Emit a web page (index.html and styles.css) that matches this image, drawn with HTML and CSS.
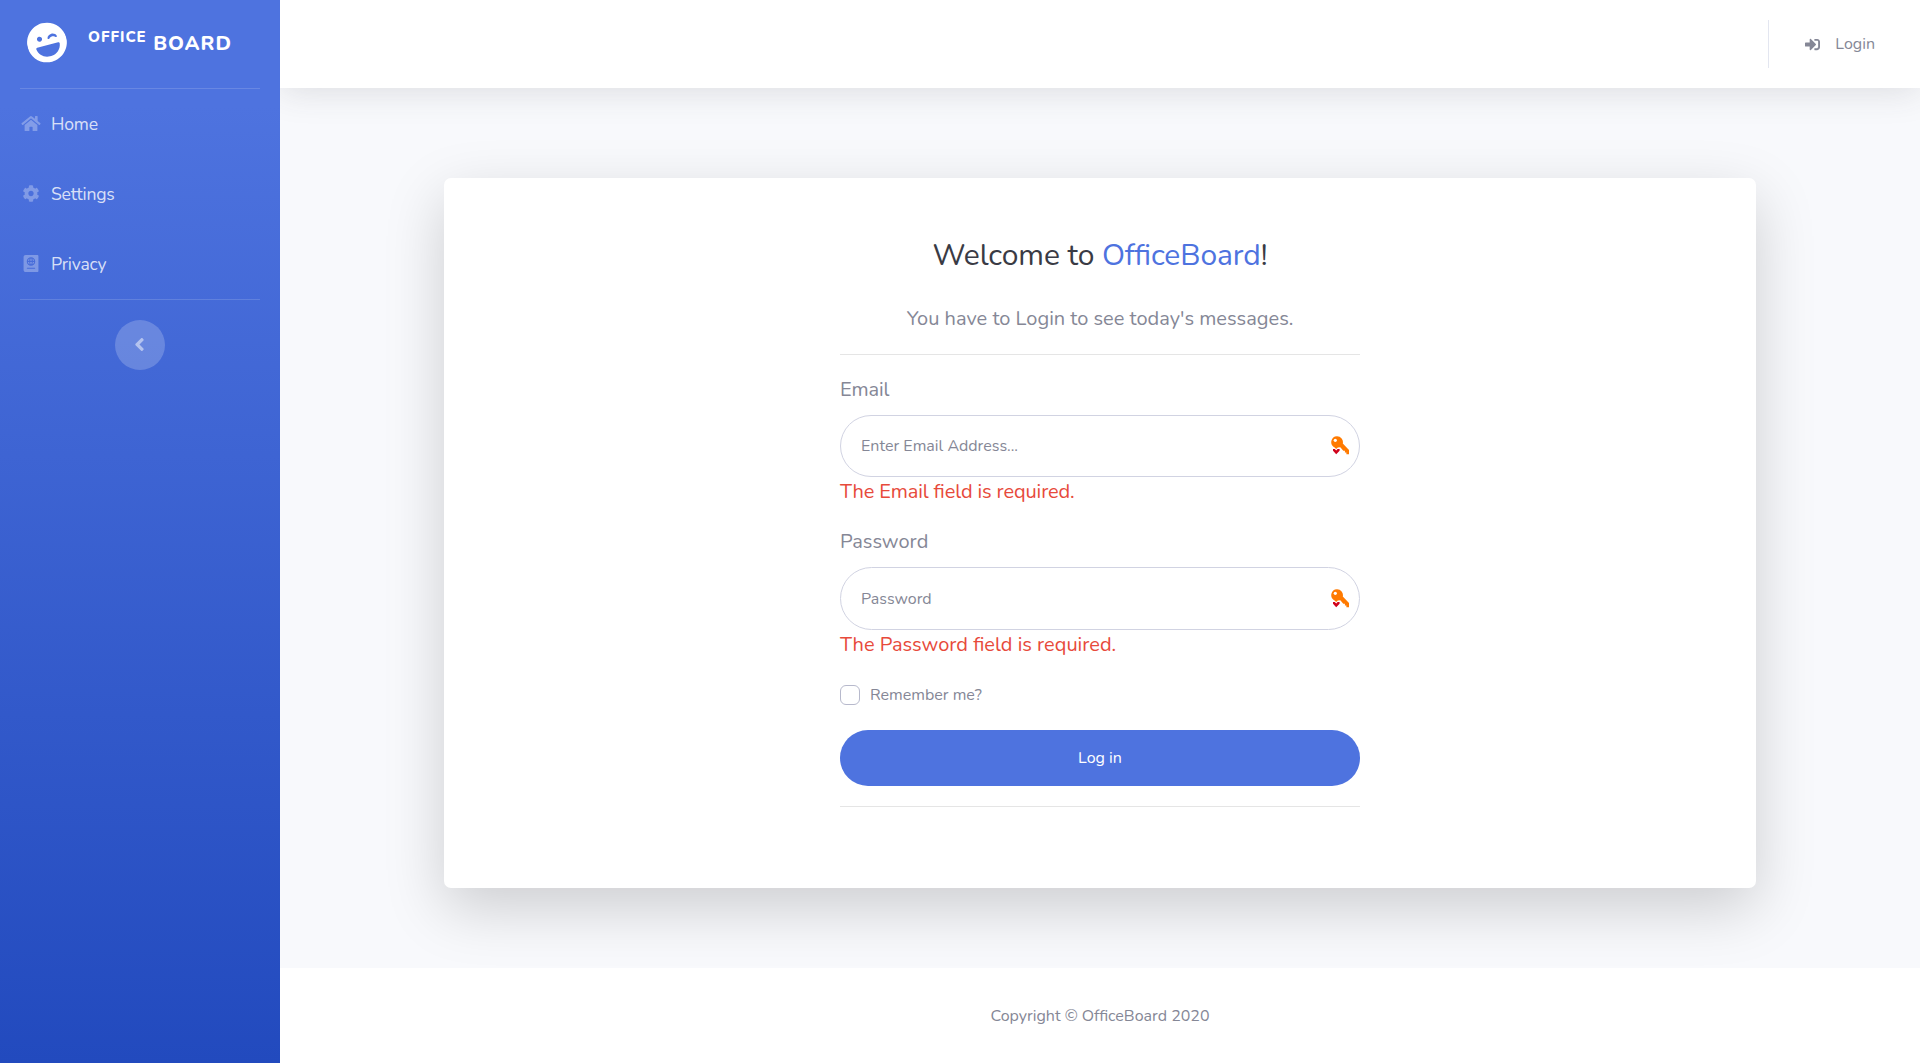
FILE: index.html
```
<!DOCTYPE html>
<html lang="en">
<head>
<meta charset="utf-8">
<title>OfficeBoard</title>
<link rel="stylesheet" href="styles.css">
</head>
<body>
<div class="wrapper">
  <nav class="sidebar">
    <a class="brand">
      <svg class="brand-icon" viewBox="0 0 496 512"><path d="M248 8C111 8 0 119 0 256s111 248 248 248 248-111 248-248S385 8 248 8zm20.1 198c4-25.2 34.2-42.1 59.9-42.1s55.9 16.9 59.9 42.1c1.7 11.1-11.4 18.3-19.8 10.8l-9.5-8.5c-14.8-13.2-46.2-13.2-61 0L288 217c-8.4 7.4-21.6.3-19.9-11zM168 160c17.7 0 32 14.3 32 32s-14.3 32-32 32-32-14.3-32-32 14.3-32 32-32zm88 272h-16c-73.4 0-134-55-142.9-126-1.2-9.5 6.3-18 15.9-18h270c9.6 0 17.1 8.4 15.9 18-8.9 71-69.5 126-142.9 126z"/></svg>
      <div class="brand-text"><sup>Office</sup> Board</div>
    </a>
    <hr class="divider">
    <a class="nav-link">
      <svg viewBox="0 0 576 512" class="nav-icon"><path d="M280.37 148.26L96 300.11V464a16 16 0 0 0 16 16l112.06-.29a16 16 0 0 0 15.92-16V368a16 16 0 0 1 16-16h64a16 16 0 0 1 16 16v95.64a16 16 0 0 0 16 16.05L464 480a16 16 0 0 0 16-16V300L295.67 148.26a12.19 12.19 0 0 0-15.3 0zM571.6 251.47L488 182.56V44.05a12 12 0 0 0-12-12h-56a12 12 0 0 0-12 12v72.61L318.47 43a48 48 0 0 0-61 0L4.34 251.47a12 12 0 0 0-1.6 16.9l25.5 31A12 12 0 0 0 45.15 301l235.22-193.74a12.19 12.19 0 0 1 15.3 0L530.9 301a12 12 0 0 0 16.9-1.6l25.5-31a12 12 0 0 0-1.7-16.93z"/></svg>
      <span>Home</span>
    </a>
    <a class="nav-link">
      <svg viewBox="0 0 512 512" class="nav-icon"><path d="M487.4 315.7l-42.6-24.6c4.3-23.2 4.3-47 0-70.2l42.6-24.6c4.9-2.8 7.1-8.6 5.5-14-11.1-35.6-30-67.8-54.7-94.6-3.8-4.1-10-5.1-14.8-2.3L380.8 110c-17.9-15.4-38.5-27.3-60.8-35.1V25.8c0-5.6-3.9-10.5-9.4-11.7-36.7-8.2-74.3-7.8-109.2 0-5.5 1.2-9.4 6.1-9.4 11.7V75c-22.2 7.9-42.8 19.8-60.8 35.1L88.7 85.5c-4.9-2.8-11-1.9-14.8 2.3-24.7 26.7-43.6 58.9-54.7 94.6-1.7 5.4.6 11.2 5.5 14L67.3 221c-4.3 23.2-4.3 47 0 70.2l-42.6 24.6c-4.9 2.8-7.1 8.6-5.5 14 11.1 35.6 30 67.8 54.7 94.6 3.8 4.1 10 5.1 14.8 2.3l42.6-24.6c17.9 15.4 38.5 27.3 60.8 35.1v49.2c0 5.6 3.9 10.5 9.4 11.7 36.7 8.2 74.3 7.8 109.2 0 5.5-1.2 9.4-6.1 9.4-11.7v-49.2c22.2-7.9 42.8-19.8 60.8-35.1l42.6 24.6c4.9 2.8 11 1.9 14.8-2.3 24.7-26.7 43.6-58.9 54.7-94.6 1.5-5.5-.7-11.3-5.6-14.1zM256 336c-44.1 0-80-35.9-80-80s35.9-80 80-80 80 35.9 80 80-35.9 80-80 80z"/></svg>
      <span>Settings</span>
    </a>
    <a class="nav-link">
      <svg viewBox="0 0 448 512" class="nav-icon"><path d="M129.62 176h39.09c1.49-27.03 6.54-51.35 14.21-70.41-27.71 13.24-48.02 39.19-53.3 70.41zm0 32c5.29 31.22 25.59 57.17 53.3 70.41-7.68-19.06-12.72-43.38-14.21-70.41h-39.09zM224 286.69c7.69-7.45 20.77-34.42 23.43-78.69h-46.87c2.67 44.26 15.75 71.24 23.44 78.69zM200.57 176h46.87c-2.66-44.26-15.74-71.24-23.43-78.69-7.7 7.45-20.78 34.43-23.44 78.69zm64.51 102.41c27.71-13.24 48.02-39.19 53.3-70.41h-39.09c-1.49 27.03-6.53 51.35-14.21 70.41zM416 0H64C28.65 0 0 28.65 0 64v384c0 35.35 28.65 64 64 64h352c17.67 0 32-14.33 32-32V32c0-17.67-14.33-32-32-32zm-80 416H112c-8.8 0-16-7.2-16-16s7.2-16 16-16h224c8.8 0 16 7.2 16 16s-7.2 16-16 16zm-112-96c-70.69 0-128-57.31-128-128S153.31 64 224 64s128 57.31 128 128-57.31 128-128 128zm41.08-214.41c7.68 19.06 12.72 43.38 14.21 70.41h39.09c-5.28-31.22-25.59-57.17-53.3-70.41z"/></svg>
      <span>Privacy</span>
    </a>
    <hr class="divider">
    <button class="toggle" aria-label="Collapse"><svg viewBox="0 0 256 512"><path d="M31.7 239l136-136c9.4-9.4 24.6-9.4 33.9 0l22.6 22.6c9.4 9.4 9.4 24.6 0 33.9L127.9 256l96.4 96.4c9.4 9.4 9.4 24.6 0 33.9L201.7 409c-9.4 9.4-24.6 9.4-33.9 0l-136-136c-9.5-9.4-9.5-24.6-.1-34z"/></svg></button>
  </nav>
  <div class="content">
    <header class="topbar">
      <div class="topbar-divider"></div>
      <a class="login-link">
        <svg viewBox="0 0 512 512"><path d="M416 448h-84c-6.6 0-12-5.4-12-12v-40c0-6.6 5.4-12 12-12h84c17.7 0 32-14.3 32-32V160c0-17.7-14.3-32-32-32h-84c-6.6 0-12-5.4-12-12V76c0-6.6 5.4-12 12-12h84c53 0 96 43 96 96v192c0 53-43 96-96 96zm-47-209L201 71c-15-15-41-4.5-41 17v96H24c-13.3 0-24 10.7-24 24v96c0 13.3 10.7 24 24 24h136v96c0 21.5 26 32 41 17l168-168c9.3-9.4 9.3-24.6 0-34z"/></svg>
        <span>Login</span>
      </a>
    </header>
    <main class="main">
      <section class="card">
        <form class="form">
          <h1 class="title">Welcome to <span>OfficeBoard</span>!</h1>
          <p class="lead">You have to Login to see today's messages.</p>
          <hr class="rule">
          <label class="label tight" for="email">Email</label>
          <div class="field">
            <input id="email" type="text" placeholder="Enter Email Address...">
            <svg class="key" viewBox="0 0 18 19"><path fill="#ff7a00" d="M6 .2a5.900 5.900 0 0 1 5.800 7.200L18 14v4.200h-2.600v-1.700h-1.500v-1.800h-1.600L9.300 11.300 6.800 11.500 5.200 13 3.600 11.400A5.900 5.900 0 0 1 6 .2z"/><circle cx="4.300" cy="4.300" r="1.600" fill="#fff"/><path fill="#d0021b" d="M2 13h1.800l1.400 1.400L6.600 13h2v1.800l-3.400 3.400L2 14.800z"/></svg>
          </div>
          <div class="error tight">The Email field is required.</div>
          <label class="label" for="password">Password</label>
          <div class="field tall">
            <input id="password" type="password" placeholder="Password">
            <svg class="key" viewBox="0 0 18 19"><path fill="#ff7a00" d="M6 .2a5.900 5.900 0 0 1 5.800 7.200L18 14v4.200h-2.600v-1.700h-1.500v-1.800h-1.600L9.300 11.300 6.800 11.500 5.200 13 3.600 11.400A5.900 5.900 0 0 1 6 .2z"/><circle cx="4.300" cy="4.300" r="1.600" fill="#fff"/><path fill="#d0021b" d="M2 13h1.800l1.400 1.400L6.600 13h2v1.800l-3.400 3.400L2 14.800z"/></svg>
          </div>
          <div class="error">The Password field is required.</div>
          <label class="remember"><input type="checkbox"><span>Remember me?</span></label>
          <button class="submit" type="button">Log in</button>
          <hr class="rule">
        </form>
      </section>
    </main>
    <footer class="footer">Copyright © OfficeBoard 2020</footer>
  </div>
</div>
</body>
</html>
```
FILE: styles.css
```
* { box-sizing: border-box; }
html { font-size: 20px; }
body {
  margin: 0;
  font-family: Nunito, Lato, "Open Sans", sans-serif;
  font-size: 1rem;
  line-height: 1.5;
  color: #858796;
  background: #f8f9fc;
}
button, input { font-family: inherit; }
.wrapper { display: flex; height: 1063px; overflow: hidden; }

.sidebar {
  width: 280px;
  flex: none;
  display: flex;
  flex-direction: column;
  background: linear-gradient(180deg, #4e73df 10%, #224abe 100%);
}
.brand {
  height: 88px;
  display: flex;
  align-items: center;
  justify-content: center;
  color: #fff;
  font-weight: 800;
  letter-spacing: .95px;
  text-transform: uppercase;
}
.brand-icon { width: 40px; height: 41px; fill: #fff; transform: rotate(-15deg); margin: -3px 1px 0 -1px; }
.brand-text { margin: 0 20px; white-space: nowrap; }
.brand-text sup { font-size: 75%; line-height: 0; position: relative; top: -.55em; vertical-align: baseline; }
.divider { width: 240px; margin: 0 auto; border: 0; border-top: 1px solid rgba(255,255,255,.15); }
.nav-link {
  height: 70px;
  padding: 0 20px;
  display: flex;
  align-items: center;
  font-size: 17.6px;
  letter-spacing: -.2px;
  color: rgba(255,255,255,.8);
}
.nav-link span { padding-top: 1px; }
.nav-icon { width: 22px; height: 17px; margin: 0 9px 1px 0; fill: rgba(255,255,255,.3); }
.toggle {
  width: 50px;
  height: 50px;
  margin: 20px auto 0;
  padding: 0;
  border: 0;
  border-radius: 50%;
  background: rgba(255,255,255,.2);
  display: flex;
  align-items: center;
  justify-content: center;
}
.toggle svg { height: 21px; width: 11px; fill: rgba(255,255,255,.5); margin: 0 2px 1px 0; }

.content { flex: 1; display: flex; flex-direction: column; overflow: hidden; }
.topbar {
  height: 88px;
  flex: none;
  display: flex;
  align-items: center;
  justify-content: flex-end;
  padding-right: 45px;
  background: #fff;
  box-shadow: 0 3px 35px rgba(58,59,69,.15);
}
.topbar-divider { width: 1px; height: 48px; background: #e3e6f0; margin-right: 36px; }
.login-link { display: flex; align-items: center; font-size: 16px; }
.login-link svg { width: 15px; height: 15px; fill: #858796; margin-right: 15px; }

.main { flex: 1; padding: 90px 164px 80px; }
.card {
  height: 710px;
  background: #fff;
  border-radius: 7px;
  box-shadow: 0 20px 60px rgba(0,0,0,.175);
  display: flex;
  justify-content: center;
}
.form { width: 520px; padding-top: 60px; }
.title {
  margin: 0;
  font-size: 30px;
  line-height: 36px;
  font-weight: 400;
  letter-spacing: -.1px;
  font-feature-settings: "liga" 1;
  color: #3a3b45;
  text-align: center;
}
.title span { color: #4e73df; }
.lead { margin: 30px 0 20px; line-height: 30px; text-align: center; }
.rule { margin: 0; border: 0; border-top: 1px solid rgba(0,0,0,.1); }
.label { display: block; line-height: 30px; margin: 20px 0 10px; }
.tight { letter-spacing: -.12px; font-feature-settings: "liga" 1; }
.field { position: relative; height: 62px; }
.field.tall { height: 63px; }
.field input {
  width: 100%;
  height: 100%;
  padding: 0 20px;
  border: 1px solid #d1d3e2;
  border-radius: 32px;
  font-size: 16px;
  background: #fff;
}
.field input::placeholder { color: #858796; opacity: 1; }
.key { position: absolute; right: 11px; top: 21px; width: 18px; height: 19px; }
.tall .key { top: 22px; }
.error { color: #e74a3b; line-height: 30px; }
.remember { display: flex; align-items: center; height: 24px; margin: 23px 0; font-size: 16px; }
.remember input {
  appearance: none;
  width: 20px;
  height: 20px;
  margin: 0 10px 0 0;
  border: 1px solid #b7b9cc;
  border-radius: 6px;
  background: #fff;
}
.submit {
  display: block;
  width: 100%;
  height: 56px;
  margin-bottom: 20px;
  border: 0;
  border-radius: 28px;
  background: #4e73df;
  color: #fff;
  font-size: 16px;
}
.footer {
  position: relative;
  height: 95px;
  flex: none;
  background: #fff;
  display: flex;
  align-items: center;
  justify-content: center;
  font-size: 16px;
}
```
